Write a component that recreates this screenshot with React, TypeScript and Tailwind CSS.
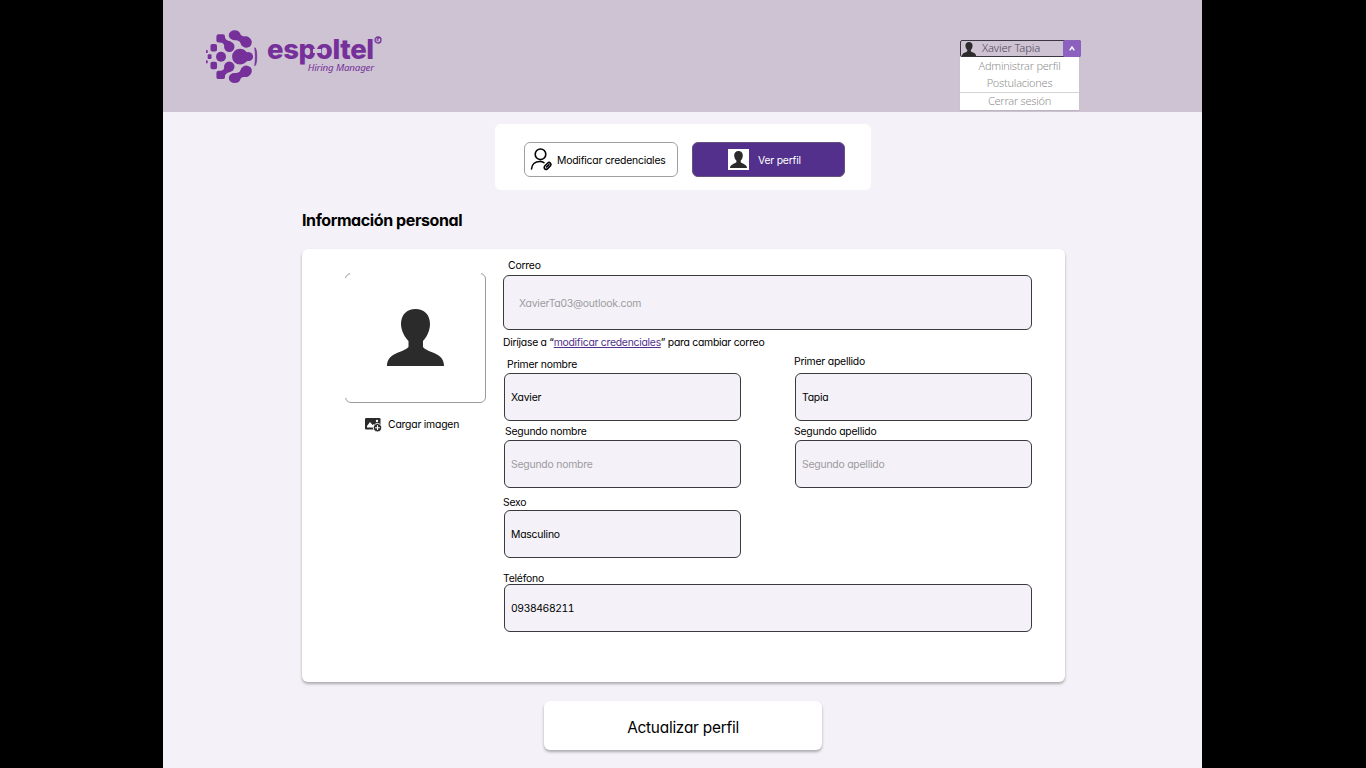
import React from "react";

const SANS = "font-['Inter','Liberation_Sans',sans-serif] [font-feature-settings:'cv11','calt'_0]";
const SMALL = "text-[10.4px] tracking-[-0.21px]";

function Person({ className, w, h }: { className?: string; w: number; h: number }) {
  return (
    <svg className={className} width={w} height={h} viewBox="0 0 57 57" preserveAspectRatio="none" fill="#2b2b2b">
      <path d="M28.500 0C37 0 43 5.500 43 15c0 7-3.500 13.500-7 17v6c2 3 8 4.500 13 7 5.500 2.500 8 6.500 8 12H0c0-5.500 2.500-9.500 8-12 5-2.500 11-4 13.500-7v-6C18 28.500 14 22 14 15 14 5.500 20 0 28.500 0z" />
    </svg>
  );
}

function LogoHalf() {
  return (
    <g>
      <ellipse cx="28.700" cy="5.200" rx="5.900" ry="5" />
      <ellipse cx="40" cy="12" rx="6" ry="5.500" transform="rotate(35 40 12)" />
      <path d="M32.500 1.700c1.500 4 4.500 5 10 5.300L36 15.700c-.5-3.500-3-5.400-7.500-5.700z" />
      <rect x="10.400" y="4.200" width="8.600" height="8.300" rx="2.200" />
      <circle cx="23.300" cy="16.700" r="5.200" />
      <path d="M18 5.500c.8 3.500 3 5.500 7 6l-6.200 6c-.3-3.500-2-5-5.300-5.500z" />
      <rect x="4.500" y="14" width="6.500" height="7.500" rx="1.800" />
      <rect x="0" y="20" width="1.700" height="3" rx=".6" />
    </g>
  );
}

function LogoMark() {
  return (
    <svg width="52" height="54" viewBox="0 0 52 54" fill="#76309a" className="block shrink-0">
      <LogoHalf />
      <g transform="translate(0 53.300) scale(1 -1)">
        <LogoHalf />
      </g>
      <circle cx="15" cy="26.700" r="5" />
      <rect x="1.700" y="24.300" width="3.800" height="4.800" rx=".9" />
      <circle cx="34" cy="26.700" r="7.900" />
      <circle cx="42.700" cy="26.700" r="4.400" />
      <path d="M38 20c1.500 2 3 2.500 5.500 2.400v8.600c-2.500 0-4 .5-5.500 2.400z" />
      <path d="M48.800 17.700c2.600 1 2.600 17 0 18 .8-6 .8-12 0-18z" stroke="#76309a" strokeWidth=".8" />
    </svg>
  );
}

function Label({ children, className = "" }: { children: React.ReactNode; className?: string }) {
  return <div className={`h-[14px] text-[10.4px] leading-[16px] whitespace-nowrap ${className}`}>{children}</div>;
}

function Box({ children, className = "" }: { children: React.ReactNode; className?: string }) {
  return (
    <div className={`flex h-12 items-center rounded-[6px] border border-[#3a393c] bg-[#f4f2f8] pt-px pl-1.5 text-[10.4px] ${className}`}>
      {children}
    </div>
  );
}

export default function App() {
  return (
    <div className={`flex h-[768px] w-[1366px] overflow-hidden bg-black text-black ${SANS}`}>
      <div className="ml-[163px] flex w-[1039px] flex-col bg-[#f4f2f8]">
        <header className="flex h-28 shrink-0 justify-between bg-[#cec3d3] pr-[120px] pl-[43px]">
          <div className="flex pt-[30px] text-[#76309a]">
            <LogoMark />
            <div className="ml-[9px] w-[116px]">
              <div className="flex h-[33px] items-start">
                <div className="relative w-[107px] text-[27.500px] leading-[38px] font-extrabold tracking-[-0.35px]">
                  espoltel
                  <span className="absolute top-[19px] left-[46px] h-[4px] w-[8px] bg-[#cec3d3]" />
                </div>
                <svg width="8" height="8" viewBox="0 0 8 8" className="mt-1.5 shrink-0" fill="none" stroke="#76309a" strokeWidth="1.300">
                  <circle cx="4" cy="4" r="3" />
                  <path d="M3 5.500v-3h2L3.500 4 5 5.500" strokeWidth=".8" />
                </svg>
              </div>
              <div className="pr-[9px] text-right font-['Noto_Sans',sans-serif] text-[9.800px] leading-[10px] font-normal tracking-[-0.2px] whitespace-nowrap italic">Hiring Manager</div>
            </div>
          </div>

          <div className="w-[122px] pt-10 font-['Noto_Sans',sans-serif] tracking-[-0.25px]">
            <div className="flex h-[17px] w-[121px] items-stretch rounded-[2px] border border-[#3c3643] text-[#4d4456]">
              <Person w={14} h={14} className="mt-px ml-px" />
              <span className="ml-[6px] flex-1 text-[11.200px] leading-[14px] font-light tracking-[-0.15px]">Xavier Tapia</span>
              <span className="-my-px -mr-px flex w-[18px] items-center justify-center rounded-[2px] bg-[#8c60bf]">
                <svg width="6" height="5" viewBox="0 0 6 5" fill="none" stroke="white" strokeWidth="1.400"><path d="M.7 4.300 3 1l2.300 3.300" /></svg>
              </span>
            </div>
            <div className="h-[53px] w-[119px] bg-white text-center text-[11px] font-light text-[#8f8f8f] shadow-[0_1px_1px_#bcb5c0]">
              <div className="h-[18px] leading-[18px]">Administrar perfil</div>
              <div className="h-[18px] border-b border-[#d4d4d4] leading-[16px]">Postulaciones</div>
              <div className="h-[17px] leading-[16px]">Cerrar sesión</div>
            </div>
          </div>
        </header>

        <nav className={`mt-3 ml-[332px] flex h-[66px] w-[376px] shrink-0 gap-[14px] rounded-[6px] bg-white pt-[18px] pl-[29px] ${SMALL}`}>
          <button className="flex h-[35px] w-[154px] items-center rounded-[6px] border border-[#a0a0a0] pl-[5px]">
            <svg width="23" height="23" viewBox="0 0 23 23" fill="none" stroke="black" strokeWidth="1.600" strokeLinecap="round">
              <circle cx="10.500" cy="6.300" r="5.300" />
              <path d="M1.500 21c.3-5 4-7.500 8.200-7.500 1.800 0 3.200.4 4.300 1.100" />
              <path d="M14.500 18.300l3.300-3.300c1.700-1.500 4.200.8 2.700 2.700l-3.300 3.300c-2 1.200-3.700-.7-2.700-2.700zM16.500 19l2.500-2.300" />
            </svg>
            <span className="ml-[4px] pt-[3px] whitespace-nowrap">Modificar credenciales</span>
          </button>
          <button className="flex h-[35px] w-[153px] items-center rounded-[6px] border border-[#65507e] bg-[#52308b] pl-[35px] text-white">
            <span className="flex h-[21px] w-[21px] items-center justify-center bg-white"><Person w={17} h={17} /></span>
            <span className="ml-[9px] pt-[3px]">Ver perfil</span>
          </button>
        </nav>

        <h1 className="mt-5 ml-[139px] h-5 text-[16px] leading-5 font-bold tracking-[-0.4px]">Información personal</h1>

        <main className={`mt-[19px] ml-[139px] flex h-[433px] w-[763px] shrink-0 rounded-[6px] bg-white pl-[43px] shadow-[0_2px_3px_rgba(0,0,0,0.3)] ${SMALL}`}>
          <aside className="w-[141px] pt-6">
            <div className="relative flex h-[130px] items-center justify-center rounded-[6px] border border-[#9a9a9a] pb-0.5">
              <span className="absolute -top-px right-[4px] left-[4px] h-px bg-white" />
              <span className="absolute top-[4px] bottom-[4px] -left-px w-px bg-white" />
              <Person w={57} h={57} />
            </div>
            <div className="mt-[13px] flex h-4 items-center pl-5">
              <svg width="17" height="17" viewBox="0 0 17 17">
                <rect x="0" y="2" width="15.500" height="11.500" rx="1.200" fill="#2b2b2b" />
                <path d="M2 11.500V10l3-4 2.500 3 1.500-1 .5 3.500z" fill="white" />
                <circle cx="12" cy="5" r="1.200" fill="white" />
                <circle cx="12.500" cy="11.700" r="4.200" fill="#2b2b2b" stroke="white" strokeWidth=".9" />
                <path d="M12.500 9.300v4.800M10.100 11.700h4.800" stroke="white" strokeWidth="1.100" />
              </svg>
              <span className="ml-[6px] pt-px whitespace-nowrap">Cargar imagen</span>
            </div>
          </aside>

          <section className="ml-[17px] w-[529px] pt-[9px]">
            <Label className="pl-[5px]">Correo</Label>
            <div className="mt-[3px] flex h-[55px] items-center rounded-[6px] border border-[#3a393c] bg-[#f4f2f8] pt-[3px] pl-[15px] text-[#9c9b9f]">XavierTa03@outlook.com</div>
            <Label className="mt-[5px] tracking-[-0.26px]">
              Diríjase a “<a className="text-[#52308b] underline">modificar credenciales</a>” para cambiar correo
            </Label>
            <div className="mt-[5px] flex justify-between">
              <div className="w-[238px] pt-[3px] pl-px">
                <Label className="pl-[3px]">Primer nombre</Label>
                <Box className="mt-0.5">Xavier</Box>
                <Label className="mt-[3px] pl-px">Segundo nombre</Label>
                <Box className="mt-0.5 text-[#9c9b9f]">Segundo nombre</Box>
                <Label className="mt-[7px] -ml-px">Sexo</Label>
                <Box className="mt-px">Masculino</Box>
              </div>
              <div className="w-[238px] pl-px">
                <Label className="-ml-px">Primer apellido</Label>
                <Box className="mt-[5px]">Tapia</Box>
                <Label className="mt-[3px] -ml-px">Segundo apellido</Label>
                <Box className="mt-0.5 text-[#9c9b9f]">Segundo apellido</Box>
              </div>
            </div>
            <Label className="mt-[13px]">Teléfono</Label>
            <Box className="-mt-px ml-px tracking-[-0.42px] [font-feature-settings:'tnum']">0938468211</Box>
          </section>
        </main>

        <button className="mt-[19px] ml-[381px] h-[49px] w-[278px] shrink-0 rounded-[6px] bg-white pt-[5px] text-[15.400px] tracking-[-0.24px] shadow-[0_2px_3px_rgba(0,0,0,0.3)]">Actualizar perfil</button>
      </div>
    </div>
  );
}
